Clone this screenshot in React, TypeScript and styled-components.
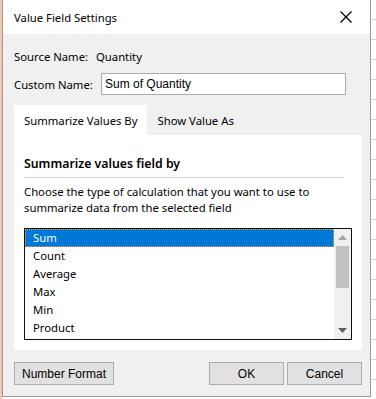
import { useState } from 'react'
import styled, { createGlobalStyle } from 'styled-components'

const uiFont = `"Noto Sans", "Open Sans", sans-serif`
const classicFont = `"Liberation Sans", Arial, sans-serif`

const GlobalStyle = createGlobalStyle`
  html, body {
    margin: 0;
    padding: 0;
    background: #ffffff;
  }
  body {
    font-family: ${uiFont};
    color: #000000;
  }
`

const Page = styled.div`
  display: flex;
  width: 376px;
  height: 399px;
  overflow: hidden;
  background: #ffffff;
`

const SheetEdge = styled.div`
  width: 2px;
  background: #f3c9ab;
`

const SheetRight = styled.div`
  flex: 1;
  background-color: #ffffff;
  background-image: repeating-linear-gradient(
    to bottom,
    transparent 0,
    transparent 19px,
    #d4d4d4 19px,
    #d4d4d4 20px
  );
  border-left: 1px solid transparent;
`

const Dialog = styled.div`
  width: 367px;
  height: 396px;
  display: flex;
  flex-direction: column;
  border: 1px solid #9a9a9a;
  border-top: 0;
  background: #f0f0f0;
`

const TitleBar = styled.div`
  height: 34px;
  display: flex;
  align-items: center;
  justify-content: space-between;
  padding: 0 18px 0 11px;
  background: #ffffff;
  font-size: 11.3px;
`

const CloseButton = styled.button`
  border: 0;
  padding: 0;
  background: transparent;
  display: flex;
  cursor: pointer;
`

const Body = styled.div`
  flex: 1;
  display: flex;
  flex-direction: column;
  padding: 14px 8px 0 11px;
  font-size: 11.3px;
`

const InfoRow = styled.div`
  display: flex;
  align-items: center;
  height: 16px;
`

const FieldRow = styled.div`
  display: flex;
  align-items: center;
  height: 22px;
  margin-top: 9px;
`

const Label = styled.span<{ $width: number }>`
  width: ${({ $width }) => $width}px;
  flex-shrink: 0;
  white-space: nowrap;
`

const TextInput = styled.input`
  width: 245px;
  height: 22px;
  box-sizing: border-box;
  border: 1px solid #acacac;
  padding: 0 3px;
  font-family: ${classicFont};
  font-size: 12px;
  color: #000000;
  background: #ffffff;
  outline: none;
`

const TabStrip = styled.div`
  display: flex;
  margin-top: 10px;
  height: 30px;
`

const Tab = styled.div<{ $active?: boolean }>`
  display: flex;
  align-items: center;
  padding: 0 10px;
  background: ${({ $active }) => ($active ? '#ffffff' : 'transparent')};
  white-space: nowrap;
  cursor: default;
`

const TabPanel = styled.div`
  background: #ffffff;
  height: 215px;
  box-sizing: border-box;
  padding: 19px 10px 0 10px;
  display: flex;
  flex-direction: column;
`

const Heading = styled.div`
  font-size: 12.3px;
  font-weight: 600;
  line-height: 20px;
  width: 320px;
  padding-bottom: 3px;
  border-bottom: 1px solid #d6d6d6;
`

const Description = styled.p`
  margin: 6px 0 0 0;
  line-height: 16px;
`

const ListBox = styled.div`
  margin-top: 12px;
  width: 328px;
  height: 112px;
  box-sizing: border-box;
  border: 1px solid #101010;
  display: flex;
`

const Items = styled.ul`
  flex: 1;
  list-style: none;
  margin: 0;
  padding: 0;
  overflow: hidden;
`

const Item = styled.li<{ $selected?: boolean }>`
  height: 18px;
  line-height: 18px;
  padding-left: 8px;
  box-sizing: border-box;
  background: ${({ $selected }) => ($selected ? '#0078d7' : 'transparent')};
  color: ${({ $selected }) => ($selected ? '#ffffff' : '#000000')};
  outline: ${({ $selected }) => ($selected ? '1px dotted #f2a33a' : 'none')};
  outline-offset: -1px;
  cursor: default;
`

const ScrollTrack = styled.div`
  width: 17px;
  background: #f0f0f0;
  display: flex;
  flex-direction: column;
  align-items: center;
`

const ArrowCell = styled.div`
  height: 17px;
  width: 17px;
  display: flex;
  align-items: center;
  justify-content: center;
`

const Thumb = styled.div`
  width: 13px;
  height: 42px;
  background: #c1c1c1;
`

const Spacer = styled.div`
  flex: 1;
`

const ButtonRow = styled.div`
  display: flex;
  align-items: center;
  gap: 3px;
  margin-top: 12px;
`

const PushButton = styled.button<{ $width: number; $push?: boolean }>`
  width: ${({ $width }) => $width}px;
  height: 23px;
  margin-left: ${({ $push }) => ($push ? 'auto' : '0')};
  box-sizing: border-box;
  border: 1px solid #adadad;
  background: #e1e1e1;
  font-family: ${classicFont};
  font-size: 12px;
  color: #000000;
  padding: 0;
  cursor: pointer;
`

const functions = ['Sum', 'Count', 'Average', 'Max', 'Min', 'Product']

export default function App() {
  const [customName, setCustomName] = useState('Sum of Quantity')
  const [selected, setSelected] = useState('Sum')
  const [tab, setTab] = useState('summarize')

  return (
    <>
      <GlobalStyle />
      <Page>
        <SheetEdge />
        <Dialog>
          <TitleBar>
            <span>Value Field Settings</span>
            <CloseButton aria-label='Close'>
              <svg width='12' height='12' viewBox='0 0 12 12'>
                <path
                  d='M0.5 0.5 L11.5 11.5 M11.5 0.5 L0.5 11.5'
                  stroke='#000'
                  strokeWidth='1.3'
                />
              </svg>
            </CloseButton>
          </TitleBar>
          <Body>
            <InfoRow>
              <Label $width={82}>Source Name:</Label>
              <span>Quantity</span>
            </InfoRow>
            <FieldRow>
              <Label $width={87}>Custom Name:</Label>
              <TextInput
                value={customName}
                onChange={(e) => setCustomName(e.target.value)}
              />
            </FieldRow>
            <TabStrip>
              <Tab
                $active={tab === 'summarize'}
                onClick={() => setTab('summarize')}
              >
                Summarize Values By
              </Tab>
              <Tab $active={tab === 'show'} onClick={() => setTab('show')}>
                Show Value As
              </Tab>
            </TabStrip>
            <TabPanel>
              <Heading>Summarize values field by</Heading>
              <Description>
                Choose the type of calculation that you want to use to
                <br />
                summarize data from the selected field
              </Description>
              <ListBox>
                <Items>
                  {functions.map((name) => (
                    <Item
                      key={name}
                      $selected={name === selected}
                      onClick={() => setSelected(name)}
                    >
                      {name}
                    </Item>
                  ))}
                </Items>
                <ScrollTrack>
                  <ArrowCell>
                    <svg width='9' height='5' viewBox='0 0 9 5'>
                      <path d='M4.5 0 L9 5 L0 5 Z' fill='#a3a3a3' />
                    </svg>
                  </ArrowCell>
                  <Thumb />
                  <Spacer />
                  <ArrowCell>
                    <svg width='9' height='5' viewBox='0 0 9 5'>
                      <path d='M0 0 L9 0 L4.5 5 Z' fill='#606060' />
                    </svg>
                  </ArrowCell>
                </ScrollTrack>
              </ListBox>
            </TabPanel>
            <ButtonRow>
              <PushButton $width={100}>Number Format</PushButton>
              <PushButton $width={75} $push>
                OK
              </PushButton>
              <PushButton $width={75}>Cancel</PushButton>
            </ButtonRow>
          </Body>
        </Dialog>
        <SheetRight />
      </Page>
    </>
  )
}
